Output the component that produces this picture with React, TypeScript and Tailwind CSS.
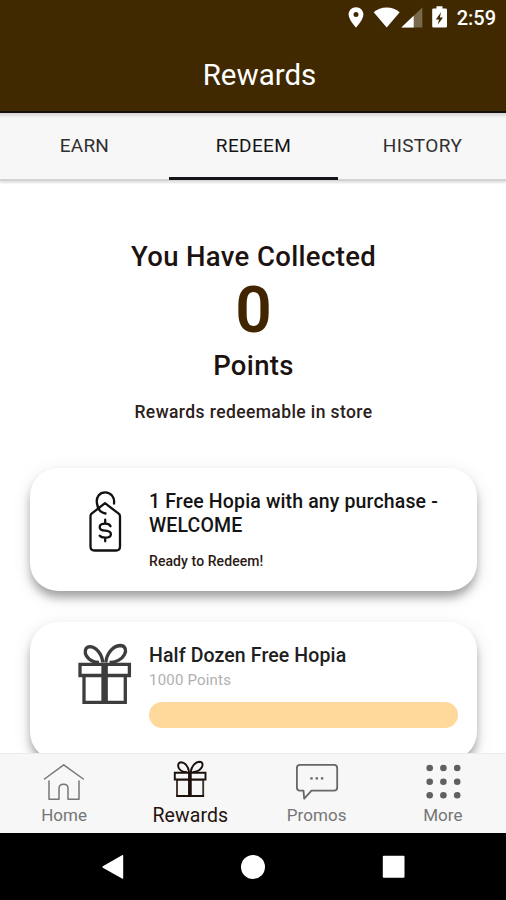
import React from "react";

function StatusBar() {
  return (
    <div className="flex h-9 items-center justify-end pr-[10px] text-white">
      <svg width="100" height="24" viewBox="348 6 100 24" fill="currentColor" className="mr-[9px]">
        <path fillRule="evenodd" d="M356 7.3c-4.2 0-7.4 3.2-7.4 7.3 0 5.3 7.4 13 7.4 13s7.4-7.7 7.4-13c0-4.100-3.200-7.300-7.400-7.300zm0 4.800a2.500 2.500 0 1 1 0 5 2.500 2.500 0 0 1 0-5z" />
        <path d="M373.700 12.300Q379 7.500 386.700 7.500T399.700 12.300L386.700 27.500Z" />
        <path d="M422.300 7.500V27.500H401.300Z" opacity="0.3" />
        <path d="M413.700 15.700V27.500H401.300Z" />
        <path fillRule="evenodd" d="M436.500 6.300h6v2.200h3.200a1.300 1.300 0 0 1 1.300 1.300v16.400a1.300 1.300 0 0 1-1.300 1.300h-12.200a1.300 1.300 0 0 1-1.300-1.300V9.800a1.300 1.300 0 0 1 1.300-1.300h3zM441 12.300l-5.200 7.200h3.200l-1.200 5 5.300-7h-3.200z" />
      </svg>
      <span className="text-[20px] font-medium leading-none">2:59</span>
    </div>
  );
}

function Tabs() {
  return (
    <div className="relative z-10 h-[68px] shrink-0 border-b-2 border-[#d2d2d2] bg-[#f7f7f7] shadow-[0_2px_2px_#e2e2e2]">
      <div className="-mr-px grid grid-cols-3 bg-linear-to-b from-[#d6d3d3] to-[#f7f7f7] to-[5px] text-center text-[19px] leading-[65px] text-[#303030]">
        <div className="tracking-[0.2px]">EARN</div>
        <div className="-mb-px h-[67px] border-b-[3px] border-[#17131a] tracking-[0.35px] text-[#161616]">REDEEM</div>
        <div className="tracking-[0.4px]">HISTORY</div>
      </div>
    </div>
  );
}

function TagIcon() {
  return (
    <svg width="34" height="64" viewBox="88 489 34 64" fill="none" stroke="#111" strokeWidth="2.300" strokeLinecap="round" strokeLinejoin="round">
      <path d="M114 503.500C115 497 110.500 492.400 105.300 492.400C99.500 492.400 96 497 96.900 503C97.600 508.500 100.500 512.700 105.500 513.500" />
      <path d="M105 503.200L91.600 513.700Q90.500 514.700 90.500 516.500V546.500Q90.500 550.500 94.500 550.500H116Q120 550.500 120 546.500V516.500Q120 514.700 118.700 513.700Z" />
      <path d="M110.500 526.200Q109.500 523.700 105.200 523.700Q99.700 523.700 99.700 527.200Q99.700 530.300 105.200 530.600Q110.900 531 110.900 534.200Q110.900 537.700 105.200 537.700Q101 537.700 99.700 535.700M105.200 519.700V523.700M105.200 537.700V541.300" />
    </svg>
  );
}

function GiftIcon() {
  return (
    <svg width="54" height="62" viewBox="78 643 54 62" fill="none" stroke="#3d3d3d" strokeWidth="3.300">
      <path d="M80 664.300H129.400V675.500H80ZM84 675.500V702.300H125.300V675.500" />
      <path d="M104.600 663V703" strokeWidth="6.500" />
      <path d="M102.700 662.500C102 653 95.500 646.700 89.500 646.700C84.500 647 84.500 653 86.500 656C89.500 660.500 94.500 662.500 99 662.500" />
      <path d="M105.700 662.500C107 652.500 113.500 646 120 645.500C126 645.500 126.500 651 124.500 654.500C122 659.500 115.500 662.500 109.500 662.500" />
    </svg>
  );
}

function RewardCard({ icon, children }: { icon: React.ReactNode; children: React.ReactNode }) {
  return (
    <div className="flex rounded-[28px] bg-white pl-[45px] pr-[19px] shadow-[0_7px_10px_-1px_rgba(0,0,0,0.33),0_5px_20px_rgba(0,0,0,0.1)]">
      <div className="flex w-[60px] shrink-0 justify-center">{icon}</div>
      <div className="ml-[14px] min-w-0 flex-1">{children}</div>
    </div>
  );
}

function HomeIcon() {
  return (
    <svg width="42" height="40" viewBox="43 761 42 40" fill="none" stroke="#777" strokeWidth="1.500" strokeLinejoin="round" strokeLinecap="round">
      <path d="M44.500 779L63.700 764.800L83.300 779" />
      <path d="M49 781V799.300H59V788.500C59 785.800 61 784.300 63.600 784.300S68 785.800 68 788.500V799.300H79V781" />
    </svg>
  );
}

function RewardsIcon() {
  return (
    <svg width="34" height="38" viewBox="173.500 760.500 34 38" fill="none" stroke="#1d0f0c" strokeWidth="1.900" className="-mt-[4px]">
      <path d="M177.500 780H203.700V796.500H177.500Z" stroke="#40352b" />
      <path d="M175.300 773.300H206V780H175.300Z" fill="#f7f7f7" />
      <path d="M177 796.500H204.500" />
      <path d="M190.400 772V797" strokeWidth="3.700" />
      <path d="M189.500 772.500C189 766.500 185 762.700 181.500 762.700C178 763 178.300 767 179.500 769C181.300 771.700 184.500 772.600 187.500 772.600" />
      <path d="M191.200 772.500C192 766.500 196 762.300 200 762.200C203.500 762.200 203.500 765.500 202.300 767.800C200.500 771 197 772.500 193 772.600" />
    </svg>
  );
}

function PromosIcon() {
  return (
    <svg width="44" height="40" viewBox="295 761 44 40" fill="none" stroke="#666" strokeWidth="1.800" strokeLinejoin="round">
      <path d="M300 764.900H334Q337.200 764.900 337.200 768V787.500Q337.200 790.700 334 790.700H311.500L304.200 798.700L303.500 790.700H300Q296.900 790.700 296.900 787.500V768Q296.900 764.900 300 764.900Z" />
      <path d="M310.300 778.300h2.400M315.600 778.300h2.400M320.900 778.300h2.400" strokeWidth="2.200" />
    </svg>
  );
}

function MoreIcon() {
  const dots = [768, 781.7, 795.3].flatMap((y) => [429.7, 443.4, 457.2].map((x) => ({ x, y })));
  return (
    <svg width="40" height="40" viewBox="423 761 40 40" fill="#606060">
      {dots.map((d) => (
        <circle key={`${d.x}-${d.y}`} cx={d.x} cy={d.y} r="3.300" />
      ))}
    </svg>
  );
}

function NavItem({ icon, label, active = false }: { icon: React.ReactNode; label: string; active?: boolean }) {
  return (
    <div className="flex flex-col items-center pt-[6px]">
      <div className="flex h-[42px] items-center">{icon}</div>
      <span className={active ? "text-[19.500px] leading-[27px] tracking-[0.1px] text-[#24120f]" : "text-[17px] leading-[27px] tracking-[0.05px] text-[#757575]"}>
        {label}
      </span>
    </div>
  );
}

export default function App() {
  return (
    <div className="flex h-[900px] w-[506px] flex-col overflow-hidden bg-white font-[Roboto,sans-serif]">
      <header className="h-[113px] shrink-0 border-b-2 border-[#15100c] bg-[#402900]">
        <StatusBar />
        <h1 className="pl-[13px] text-center text-[29.500px] leading-[78px] text-white">Rewards</h1>
      </header>
      <Tabs />
      <main className="min-h-0 flex-1 overflow-hidden pl-[30px] pr-[29px] pt-[58px]">
        <section className="text-center font-medium text-[#1c1310]">
          <div className="text-[27.500px] leading-[36px] tracking-[0.35px]">You Have Collected</div>
          <div className="h-[68px] text-[64px] font-semibold leading-[72px] text-[#402500]">0</div>
          <div className="text-[27.500px] leading-[46px] tracking-[0.35px]">Points</div>
          <div className="mt-[12px] text-[17.500px] leading-[22px] tracking-[0.4px] text-[#2b201b]">Rewards redeemable in store</div>
        </section>
        <section className="mt-[45px] flex flex-col gap-[31px]">
          <RewardCard icon={<div className="pt-[21px]"><TagIcon /></div>}>
            <div className="h-[123px] pt-[22px]">
              <div className="whitespace-nowrap text-[19.500px] font-medium leading-[24px] tracking-[0.14px] text-[#141414]">
                1 Free Hopia with any purchase -<br />WELCOME
              </div>
              <div className="mt-[13px] text-[14px] font-medium leading-[20px] tracking-[0.08px] text-[#2b1a14]">Ready to Redeem!</div>
            </div>
          </RewardCard>
          <RewardCard icon={<div className="pt-[21px]"><GiftIcon /></div>}>
            <div className="h-[138px] pt-[21px]">
              <div className="text-[19.500px] font-medium leading-[25px] tracking-[0.12px] text-[#202020]">Half Dozen Free Hopia</div>
              <div className="mt-[1px] text-[15px] leading-[22px] tracking-[0.2px] text-[#b0b0b0]">1000 Points</div>
              <div className="mt-[11px] h-[26px] rounded-full bg-[#ffd89b]" />
            </div>
          </RewardCard>
        </section>
      </main>
      <nav className="z-10 grid h-[80px] shrink-0 grid-cols-4 border-t border-[#ececec] bg-[#f7f7f7] pl-px">
        <NavItem icon={<HomeIcon />} label="Home" />
        <NavItem icon={<RewardsIcon />} label="Rewards" active />
        <NavItem icon={<PromosIcon />} label="Promos" />
        <NavItem icon={<MoreIcon />} label="More" />
      </nav>
      <footer className="flex h-[67px] shrink-0 items-center justify-center bg-black">
        <svg width="304" height="26" viewBox="101.500 854 304 26" fill="white">
          <path d="M103.300 866.200L122.500 855.200Q123.700 854.700 123.700 856V877.800Q123.700 879.200 122.500 878.500L103.300 867.700Q102.300 867 103.300 866.200Z" />
          <circle cx="253.500" cy="866.900" r="12" />
          <rect x="383.300" y="855.800" width="21.700" height="22" rx="1" />
        </svg>
      </footer>
    </div>
  );
}
